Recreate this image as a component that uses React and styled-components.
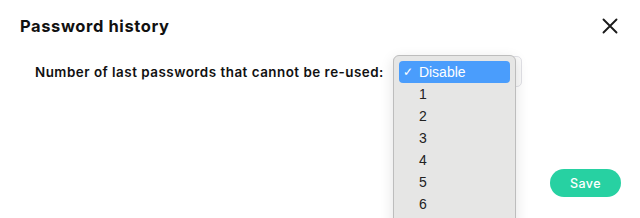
import React from "react";
import styled, { createGlobalStyle } from "styled-components";

const Global = createGlobalStyle`
    html, body {
        margin: 0;
        padding: 0;
        background: #fff;
    }
    body {
        font-family: Inter, "Noto Sans", sans-serif;
        color: #111;
    }
`;

const Modal = styled.div`
    width: 640px;
    height: 218px;
    box-sizing: border-box;
    padding: 15px 19px 21px 20px;
    display: flex;
    flex-direction: column;
    overflow: hidden;
`;

const Header = styled.div`
    display: flex;
    align-items: center;
    justify-content: space-between;
    height: 22px;
`;

const Title = styled.h2`
    margin: 0;
    font-size: 16.5px;
    font-weight: 700;
    letter-spacing: 0.6px;
`;

const Close = styled.button`
    border: 0;
    background: none;
    padding: 0;
    width: 18px;
    height: 18px;
    margin-right: 2px;
    display: flex;
    align-items: center;
    justify-content: center;
    cursor: pointer;
`;

const Body = styled.div`
    flex: 1;
    padding: 19px 0 0 15px;
`;

const Field = styled.div`
    display: flex;
    align-items: center;
    gap: 9px;
`;

const Label = styled.label`
    font-size: 13.4px;
    font-weight: 600;
    letter-spacing: 0.5px;
`;

const SelectWrap = styled.div`
    position: relative;
    width: 129px;
    height: 31px;
`;

const SelectBox = styled.div`
    box-sizing: border-box;
    height: 100%;
    border: 1px solid #e1e1e6;
    border-radius: 5px;
    background: #fafafa;
    display: flex;
    align-items: center;
    justify-content: flex-end;
    padding-right: 5px;
`;

const Arrow = styled.span`
    width: 0;
    height: 0;
    border-left: 2px solid transparent;
    border-right: 2px solid transparent;
    border-top: 3px solid #222;
`;

const Menu = styled.ul`
    position: absolute;
    top: -1px;
    left: 0;
    width: 123px;
    margin: 0;
    padding: 5px 5px 40px;
    box-sizing: border-box;
    list-style: none;
    background: #e6e6e5;
    border: 1px solid #bdbdbd;
    border-radius: 6px;
    box-shadow: 0 4px 14px rgba(0, 0, 0, 0.12);
    font-family: "Liberation Sans", Arial, sans-serif;
`;

const Option = styled.li`
    height: 22px;
    display: flex;
    align-items: center;
    padding-left: ${p => (p.$selected ? "4px" : "20px")};
    border-radius: 4px;
    font-size: 14px;
    color: ${p => (p.$selected ? "#fff" : "#222")};
    background: ${p => (p.$selected ? "#4a9dfc" : "transparent")};
`;

const Check = styled.span`
    width: 16px;
    font-size: 12px;
`;

const Footer = styled.div`
    display: flex;
    justify-content: flex-end;
`;

const SaveButton = styled.button`
    width: 71px;
    height: 28px;
    border: 0;
    border-radius: 14px;
    background: #27d1a2;
    color: #fff;
    font-family: Inter, "Noto Sans", sans-serif;
    font-size: 12.5px;
    font-weight: 500;
    letter-spacing: 0.4px;
    cursor: pointer;
`;

const options = ["Disable", "1", "2", "3", "4", "5", "6"];

export default function App() {
    return (
        <>
            <Global />
            <Modal>
                <Header>
                    <Title>Password history</Title>
                    <Close aria-label="Close">
                        <svg width="16" height="16" viewBox="0 0 16 16">
                            <path d="M1.5 1.5 L14.5 14.5 M14.5 1.5 L1.5 14.5" stroke="#1a1a1a" strokeWidth="1.9" strokeLinecap="round" />
                        </svg>
                    </Close>
                </Header>
                <Body>
                    <Field>
                        <Label>Number of last passwords that cannot be re-used:</Label>
                        <SelectWrap>
                            <SelectBox>
                                <Arrow />
                            </SelectBox>
                            <Menu>
                                {options.map((o, i) => (
                                    <Option key={o} $selected={i === 0}>
                                        {i === 0 && <Check>✓</Check>}
                                        {o}
                                    </Option>
                                ))}
                            </Menu>
                        </SelectWrap>
                    </Field>
                </Body>
                <Footer>
                    <SaveButton>Save</SaveButton>
                </Footer>
            </Modal>
        </>
    );
}
